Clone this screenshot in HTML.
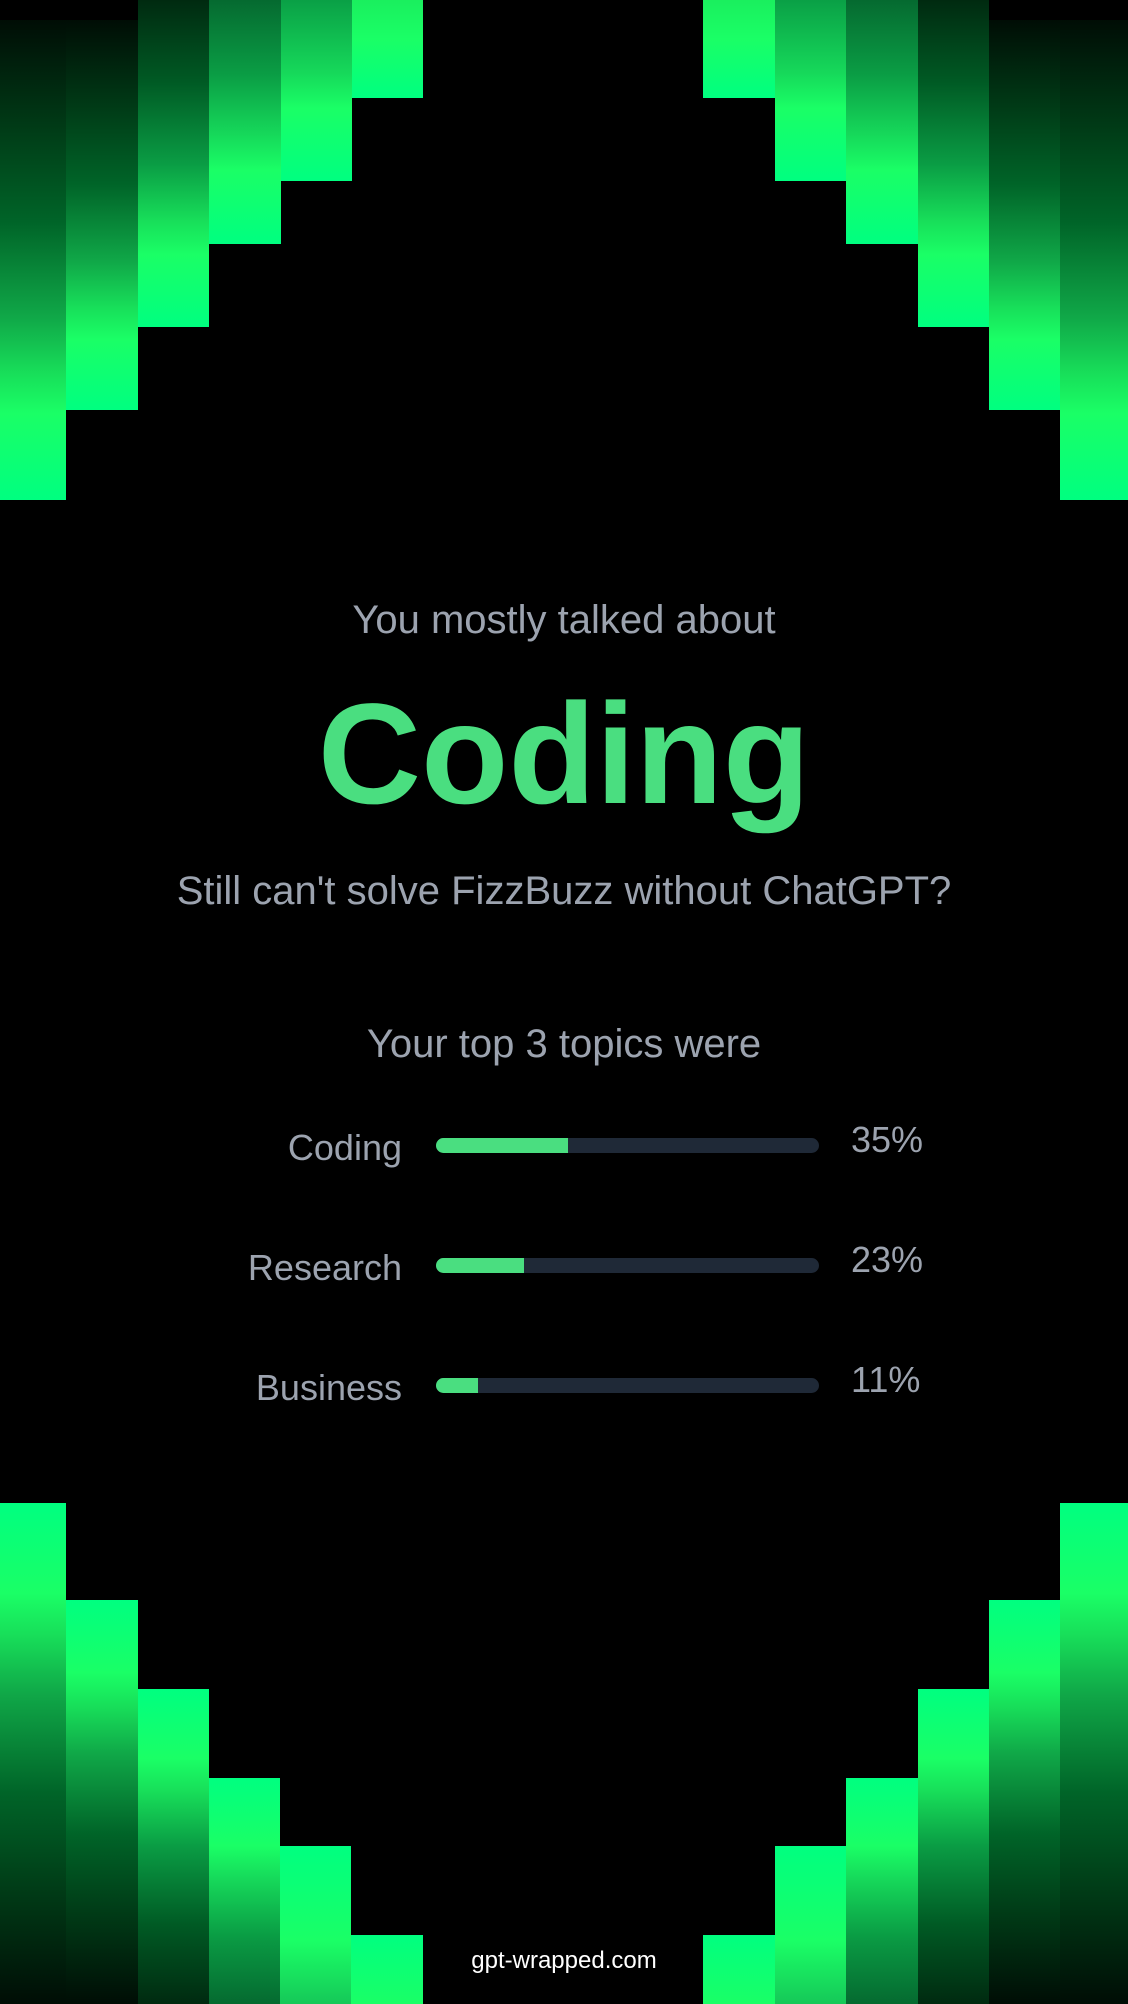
<!DOCTYPE html>
<html><head><meta charset="utf-8"><style>
html,body{margin:0;padding:0;background:#000;}
body{width:1128px;height:2004px;position:relative;overflow:hidden;font-family:"Liberation Sans",Arial,sans-serif;}
.b{position:absolute;}
.t{background:linear-gradient(to bottom,#000d05 0%,#003a16 22%,#006428 42%,#10a848 62%,#18e05a 74%,#1aff66 82%,#00ff80 100%);}
.u{background:linear-gradient(to top,#000d05 0%,#003a16 22%,#006428 42%,#10a848 62%,#18e05a 74%,#1aff66 82%,#00ff80 100%);}
.txt{position:absolute;left:0;width:1128px;text-align:center;color:#9ca3af;white-space:nowrap;}
.lab{position:absolute;right:726px;color:#9ca3af;font-size:36px;text-align:right;}
.bar{position:absolute;left:436px;width:383px;height:15px;border-radius:8px;background:#1f2937;overflow:hidden;}
.bar i{display:block;height:100%;background:#4ade80;}
.pct{position:absolute;left:851px;color:#9ca3af;font-size:36px;}
</style></head><body>
<div class="b t" style="left:0;top:20px;width:66px;height:480px"></div>
<div class="b t" style="left:66px;top:20px;width:72px;height:390px"></div>
<div class="b t" style="left:138px;top:0;width:71px;height:327px;background:linear-gradient(to bottom,#002a10 0%,#005a24 25%,#0a9c44 50%,#18e05a 68%,#1aff66 78%,#00ff80 100%)"></div>
<div class="b t" style="left:209px;top:0;width:72px;height:244px;background:linear-gradient(to bottom,#056a30 0%,#0a9c44 30%,#16d85a 55%,#1aff66 70%,#00ff80 100%)"></div>
<div class="b t" style="left:281px;top:0;width:71px;height:181px;background:linear-gradient(to bottom,#0aa046 0%,#16d85a 40%,#1aff66 60%,#00ff80 100%)"></div>
<div class="b t" style="left:352px;top:0;width:71px;height:98px;background:linear-gradient(to bottom,#1aef5e 0%,#1aff66 40%,#00ff80 100%)"></div>

<div class="b t" style="left:1060px;top:20px;width:68px;height:480px"></div>
<div class="b t" style="left:989px;top:20px;width:71px;height:390px"></div>
<div class="b t" style="left:918px;top:0;width:71px;height:327px;background:linear-gradient(to bottom,#002a10 0%,#005a24 25%,#0a9c44 50%,#18e05a 68%,#1aff66 78%,#00ff80 100%)"></div>
<div class="b t" style="left:846px;top:0;width:72px;height:244px;background:linear-gradient(to bottom,#056a30 0%,#0a9c44 30%,#16d85a 55%,#1aff66 70%,#00ff80 100%)"></div>
<div class="b t" style="left:775px;top:0;width:71px;height:181px;background:linear-gradient(to bottom,#0aa046 0%,#16d85a 40%,#1aff66 60%,#00ff80 100%)"></div>
<div class="b t" style="left:703px;top:0;width:72px;height:98px;background:linear-gradient(to bottom,#1aef5e 0%,#1aff66 40%,#00ff80 100%)"></div>

<div class="b u" style="left:0;top:1503px;width:66px;height:501px"></div>
<div class="b u" style="left:66px;top:1600px;width:72px;height:404px"></div>
<div class="b u" style="left:138px;top:1689px;width:71px;height:315px;background:linear-gradient(to top,#002a10 0%,#005a24 25%,#0a9c44 50%,#18e05a 68%,#1aff66 78%,#00ff80 100%)"></div>
<div class="b u" style="left:209px;top:1778px;width:71px;height:226px;background:linear-gradient(to top,#056a30 0%,#0a9c44 30%,#16d85a 55%,#1aff66 70%,#00ff80 100%)"></div>
<div class="b u" style="left:280px;top:1846px;width:71px;height:158px;background:linear-gradient(to top,#16c858 0%,#1aff66 40%,#00ff80 100%)"></div>
<div class="b u" style="left:351px;top:1935px;width:72px;height:69px;background:linear-gradient(to top,#1aff66 0%,#00ff80 100%)"></div>

<div class="b u" style="left:1060px;top:1503px;width:68px;height:501px"></div>
<div class="b u" style="left:989px;top:1600px;width:71px;height:404px"></div>
<div class="b u" style="left:918px;top:1689px;width:71px;height:315px;background:linear-gradient(to top,#002a10 0%,#005a24 25%,#0a9c44 50%,#18e05a 68%,#1aff66 78%,#00ff80 100%)"></div>
<div class="b u" style="left:846px;top:1778px;width:72px;height:226px;background:linear-gradient(to top,#056a30 0%,#0a9c44 30%,#16d85a 55%,#1aff66 70%,#00ff80 100%)"></div>
<div class="b u" style="left:775px;top:1846px;width:71px;height:158px;background:linear-gradient(to top,#16c858 0%,#1aff66 40%,#00ff80 100%)"></div>
<div class="b u" style="left:703px;top:1935px;width:72px;height:69px;background:linear-gradient(to top,#1aff66 0%,#00ff80 100%)"></div>

<div class="txt" style="top:597px;font-size:40px;line-height:46px">You mostly talked about</div>
<div class="txt" style="top:670px;font-size:143px;line-height:170px;font-weight:bold;color:#4ade80">Coding</div>
<div class="txt" style="top:868px;font-size:40px;line-height:46px">Still can't solve FizzBuzz without ChatGPT?</div>
<div class="txt" style="top:1021px;font-size:40px;line-height:46px">Your top 3 topics were</div>

<div class="lab" style="top:1127px">Coding</div>
<div class="bar" style="top:1138px"><i style="width:34.5%"></i></div>
<div class="pct" style="top:1119px">35%</div>

<div class="lab" style="top:1247px">Research</div>
<div class="bar" style="top:1258px"><i style="width:23%"></i></div>
<div class="pct" style="top:1239px">23%</div>

<div class="lab" style="top:1367px">Business</div>
<div class="bar" style="top:1378px"><i style="width:11%"></i></div>
<div class="pct" style="top:1359px">11%</div>

<div class="txt" style="top:1947px;font-size:24px;line-height:28px;color:#fff">gpt-wrapped.com</div>
</body></html>
